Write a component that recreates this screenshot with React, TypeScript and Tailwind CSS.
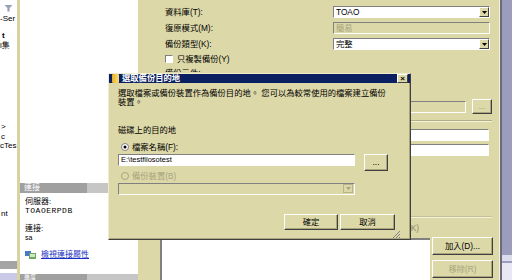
import React from 'react'

const font = { fontFamily: '"Liberation Sans", "Noto Sans CJK TC", sans-serif' }

function DropArrow() {
  return (
    <div className="flex h-full w-[10px] items-center justify-center border border-t-white border-l-white border-b-[#404040] border-r-[#404040] bg-[#dcd8a8]">
      <svg width="5" height="3" viewBox="0 0 5 3">
        <path d="M0 0h5L2.5 3z" fill="#000" />
      </svg>
    </div>
  )
}

function Combo({ text, disabled }: { text: string; disabled?: boolean }) {
  return (
    <div
      className={`flex h-[12px] items-center justify-between border border-t-[#808080] border-l-[#808080] border-b-white border-r-white pl-[2px] ${
        disabled ? 'bg-[#dcd8a8] text-[#a8a480]' : 'bg-white text-black'
      }`}
    >
      <span className="leading-none">{text}</span>
      {!disabled && <DropArrow />}
    </div>
  )
}

function ClassicButton({ label, w, h, disabled }: { label: string; w: string; h: string; disabled?: boolean }) {
  return (
    <div
      className={`flex items-center justify-center border border-t-white border-l-white border-b-[#404040] border-r-[#404040] bg-[#dcd8a8] shadow-[inset_-1px_-1px_0_#a8a47c] ${w} ${h} ${
        disabled ? 'text-[#a8a480]' : 'text-black'
      }`}
    >
      {label}
    </div>
  )
}

function LeftStrip() {
  return (
    <div className="relative flex w-[17px] shrink-0 flex-col overflow-hidden bg-white text-[8px] leading-none text-black">
      <svg className="ml-[3px] mt-[5px]" width="11" height="9" viewBox="0 0 11 9">
        <path d="M0 0h11L7 4v5H4V4z" fill="#9aa0b8" />
      </svg>
      <span className="mt-[3px] whitespace-nowrap">-Ser</span>
      <span className="mt-[9px] pl-[2px] font-bold">t</span>
      <span className="mt-[2px] whitespace-nowrap">l集</span>
      <span className="mt-[73px] pl-[1px]">&gt;</span>
      <span className="mt-[2px] pl-[1px]">c</span>
      <span className="mt-[1px] whitespace-nowrap">cTes</span>
      <span className="mt-[60px] pl-[1px]">nt</span>
      <div className="mt-[43px] h-[11px] bg-[#a4a4a4]" />
      <div className="mt-[4px] h-[10px] bg-[#cacae8]" />
    </div>
  )
}

function ConnectPanel() {
  return (
    <div className="flex w-[118px] shrink-0 flex-col bg-white text-[8px] leading-none text-black">
      <div className="mt-[183px] flex h-[10px]">
        <div className="flex w-[67px] items-center bg-[#a0a0a0] pl-[4px] text-white">連接</div>
        <div className="flex-1 bg-[#c6c6c6]" />
      </div>
      <div className="flex flex-col pl-[5px]">
        <span className="mt-[5px]">伺服器:</span>
        <span className="mt-[1px] tracking-[0.5px]" style={{ fontFamily: '"Liberation Mono", monospace' }}>
          TOAOERPDB
        </span>
        <span className="mt-[10px]">連接:</span>
        <span className="mt-[1px] text-[7px]">sa</span>
        <div className="mt-[9px] flex items-center gap-[5px]">
          <svg width="11" height="9" viewBox="0 0 11 9">
            <rect x="0" y="1" width="6" height="5" fill="#4a78c8" />
            <rect x="4" y="3" width="7" height="6" fill="#6aa860" />
            <rect x="5" y="4" width="5" height="3" fill="#cfe8c0" />
          </svg>
          <span className="text-[#1a30c0] underline">檢視連接屬性</span>
        </div>
      </div>
      <div className="mt-auto flex h-[6px]">
        <div className="flex w-[67px] items-start bg-[#a0a0a0] pl-[4px] text-[6px] text-white">進度</div>
        <div className="flex-1 bg-[#c6c6c6]" />
      </div>
    </div>
  )
}

function MainWindow() {
  return (
    <div className="flex w-[362px] shrink-0 flex-col border-r border-r-[#f4f2dc] bg-[#dcd8a8] text-[8.3px] leading-none text-black">
      <div className="mt-[6px] flex flex-col gap-[4px] pl-[27px]">
        <div className="flex h-[12px] items-center">
          <span className="w-[168px]">資料庫(T):</span>
          <div className="w-[157px]">
            <Combo text="TOAO" />
          </div>
        </div>
        <div className="flex h-[12px] items-center">
          <span className="w-[168px]">復原模式(M):</span>
          <div className="w-[157px]">
            <Combo text="簡易" disabled />
          </div>
        </div>
        <div className="flex h-[12px] items-center">
          <span className="w-[168px]">備份類型(K):</span>
          <div className="w-[157px]">
            <Combo text="完整" />
          </div>
        </div>
        <div className="flex h-[10px] items-center gap-[4px]">
          <div className="h-[8px] w-[8px] border border-t-[#808080] border-l-[#808080] border-b-white border-r-white bg-white" />
          <span>只複製備份(Y)</span>
        </div>
        {/* label sits under the dialog, only its top shows */}
        <div className="h-[4px] overflow-hidden">
          <span className="block pt-[1px]">備份元件:</span>
        </div>
      </div>

      <div className="mt-[27px] flex items-center justify-end gap-[6px] pr-[7px]">
        <div className="h-[12px] w-[200px] border border-t-[#808080] border-l-[#808080] border-b-white border-r-white" />
        <ClassicButton label="..." w="w-[20px]" h="h-[15px]" disabled />
      </div>
      <div className="mr-[7px] mt-[6px] ml-[30px] border-t border-t-[#b0ac84] border-b border-b-[#f4f2dc]" />
      <div className="mt-[7px] flex flex-col items-end gap-[3px] pr-[10px]">
        <div className="h-[12px] w-[200px] border border-t-[#808080] border-l-[#808080] border-b-white border-r-white bg-white" />
        <div className="h-[12px] w-[200px] border border-t-[#808080] border-l-[#808080] border-b-white border-r-white bg-white" />
      </div>
      <div className="mr-[7px] mt-[60px] ml-[30px] border-t border-t-[#c4c094] border-b border-b-[#f4f2dc]" />
      <div className="mt-[6px] flex justify-end pr-[80px] text-[#8c8866]">
        <span>至(K)</span>
      </div>
      <div className="mt-[6px] flex flex-1 items-start gap-[2px]">
        <div className="ml-[22px] h-[42px] w-[270px] border-t-2 border-l-2 border-t-[#808080] border-l-[#808080] bg-white" />
        <div className="-mt-[1px] flex flex-col gap-[5px]">
          <ClassicButton label="加入(D)..." w="w-[61px]" h="h-[18px]" />
          <ClassicButton label="移除(R)" w="w-[61px]" h="h-[18px]" disabled />
        </div>
      </div>
    </div>
  )
}

function RightStrip() {
  return (
    <div className="flex flex-1 flex-col border-l-2 border-l-[#6c6c78] bg-[#9c9cbc]">
      <div className="mt-[255px] h-[6px] bg-[#dcdcec]" />
      <div className="h-[2px] bg-[#9c9cbc]" />
      <div className="h-[17px] bg-[#e8e8f4]" />
    </div>
  )
}

function BackupDialog() {
  return (
    <div className="absolute left-[108px] top-[73px] flex h-[167px] w-[303px] flex-col border border-t-[#eeeccc] border-l-[#eeeccc] border-b-[#404040] border-r-[#404040] bg-[#dcd8a8] text-[8.3px] leading-none text-black shadow-[inset_-1px_-1px_0_#a8a47c]">
      <div className="flex h-[12px] items-center justify-between bg-[#0a2060] pl-[3px] pr-[2px]">
        <div className="flex items-center gap-[3px]">
          <div className="h-[9px] w-[7px] rounded-[1px] bg-gradient-to-r from-[#e8b020] to-[#fce078]" />
          <span className="font-bold text-white">選取備份目的地</span>
        </div>
        <div className="flex h-[9px] w-[11px] items-center justify-center border border-t-white border-l-white border-b-[#404040] border-r-[#404040] bg-[#dcd8a8] text-[8px] font-bold">
          ×
        </div>
      </div>
      <div className="flex flex-1 flex-col px-[9px]">
        <p className="mt-[6px] leading-[9px]">
          選取檔案或備份裝置作為備份目的地。 您可以為較常使用的檔案建立備份
          <br />
          裝置。
        </p>
        <span className="mt-[19px]">磁碟上的目的地</span>
        <div className="mt-[9px] flex items-center gap-[3px] pl-[3px]">
          <svg width="8" height="8" viewBox="0 0 8 8">
            <circle cx="4" cy="4" r="3.5" fill="#fff" stroke="#808080" />
            <circle cx="4" cy="4" r="1.5" fill="#000" />
          </svg>
          <span>檔案名稱(F):</span>
        </div>
        <div className="mt-[2px] flex items-start gap-[9px]">
          <div className="flex h-[12px] w-[237px] items-center border border-t-[#808080] border-l-[#808080] border-b-white border-r-white bg-white pl-[2px] text-[7.5px]">
            E:\testfilosotest
          </div>
          <ClassicButton label="..." w="w-[24px]" h="h-[17px]" />
        </div>
        <div className="mt-[1px] flex items-center gap-[3px] pl-[3px] text-[#a8a480]">
          <svg width="8" height="8" viewBox="0 0 8 8">
            <circle cx="4" cy="4" r="3.5" fill="#dcd8a8" stroke="#a8a480" />
          </svg>
          <span>備份裝置(B)</span>
        </div>
        <div className="mt-[3px] w-[237px]">
          <div className="flex h-[12px] items-center justify-end border border-t-[#808080] border-l-[#808080] border-b-white border-r-white bg-[#dcd8a8] pr-[1px]">
            <div className="flex h-[9px] w-[10px] items-center justify-center border border-[#b8b490]">
              <svg width="5" height="3" viewBox="0 0 5 3">
                <path d="M0 0h5L2.5 3z" fill="#a8a480" />
              </svg>
            </div>
          </div>
        </div>
        <div className="mt-[19px] flex justify-end gap-[2px] pr-[6px]">
          <ClassicButton label="確定" w="w-[54px]" h="h-[16px]" />
          <ClassicButton label="取消" w="w-[55px]" h="h-[16px]" />
        </div>
        <div className="mt-auto flex justify-end pb-[1px]">
          <svg width="9" height="9" viewBox="0 0 9 9">
            <path d="M8 1L1 8M8 4L4 8M8 7L7 8" stroke="#808080" strokeWidth="1" />
          </svg>
        </div>
      </div>
    </div>
  )
}

export default function App() {
  return (
    <div className="relative flex h-[280px] w-[512px] overflow-hidden bg-white" style={font}>
      <LeftStrip />
      <div className="w-[3px] shrink-0 bg-[#d8d4a2]" />
      <ConnectPanel />
      <MainWindow />
      <RightStrip />
      <BackupDialog />
    </div>
  )
}
